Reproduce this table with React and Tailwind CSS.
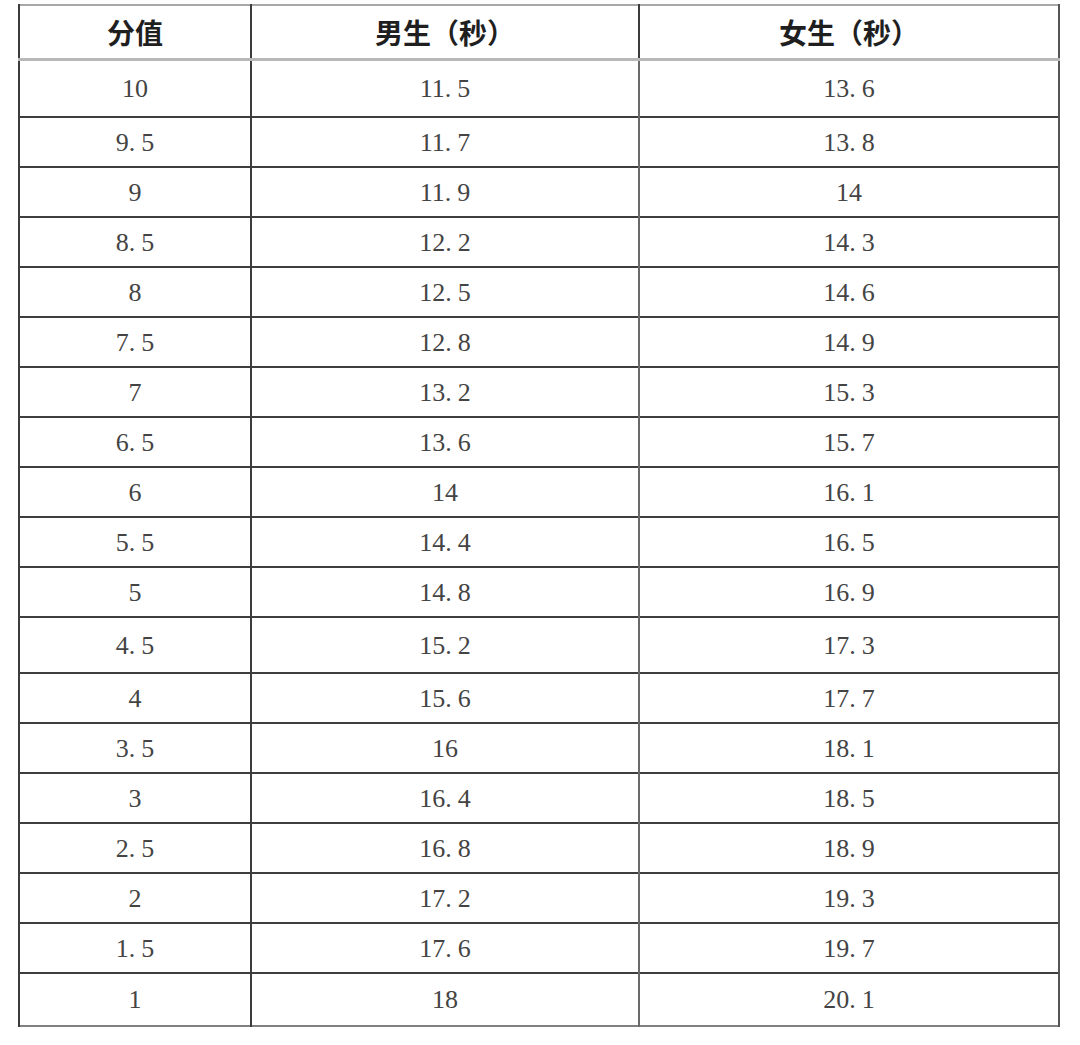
import React from "react";

const rows = [
  ["10", "11.5", "13.6", "h-[58px]"],
  ["9.5", "11.7", "13.8", "h-[50px]"],
  ["9", "11.9", "14", "h-[50px]"],
  ["8.5", "12.2", "14.3", "h-[50px]"],
  ["8", "12.5", "14.6", "h-[50px]"],
  ["7.5", "12.8", "14.9", "h-[50px]"],
  ["7", "13.2", "15.3", "h-[50px]"],
  ["6.5", "13.6", "15.7", "h-[50px]"],
  ["6", "14", "16.1", "h-[50px]"],
  ["5.5", "14.4", "16.5", "h-[50px]"],
  ["5", "14.8", "16.9", "h-[50px]"],
  ["4.5", "15.2", "17.3", "h-[56px]"],
  ["4", "15.6", "17.7", "h-[50px]"],
  ["3.5", "16", "18.1", "h-[50px]"],
  ["3", "16.4", "18.5", "h-[50px]"],
  ["2.5", "16.8", "18.9", "h-[50px]"],
  ["2", "17.2", "19.3", "h-[50px]"],
  ["1.5", "17.6", "19.7", "h-[50px]"],
  ["1", "18", "20.1", "h-[53px]"],
];

// mimic the wide half-width period of the original song-ti digits
function Num({ v }) {
  const [a, b] = v.split(".");
  if (b === undefined) return <span>{a}</span>;
  return (
    <span>
      {a}
      <span className="mr-[6px]">.</span>
      {b}
    </span>
  );
}

export default function App() {
  return (
    <div className="w-[1080px] h-[1045px] bg-white pt-[4px] pl-[18px]">
      <table className="table-fixed border-collapse w-[1040px] text-center">
        <colgroup>
          <col className="w-[232px]" />
          <col className="w-[388px]" />
          <col className="w-[420px]" />
        </colgroup>
        <thead>
          <tr className="h-[54px] border-t-2 border-t-[#a8a8a8] border-b-[3px] border-b-[#b8b8b8]">
            {["分值", "男生（秒）", "女生（秒）"].map((h, i) => (
              <th
                key={h}
                className={`font-bold text-[28px] text-[#1f1f1f] font-['Noto_Sans_CJK_SC',sans-serif] border-l-2 border-l-[#3c3c3c] ${
                  i === 2 ? "border-r-2 border-r-[#555]" : ""
                }`}
              >
                {h}
              </th>
            ))}
          </tr>
        </thead>
        <tbody className="font-['Liberation_Serif','Noto_Sans_CJK_SC',serif] text-[26px] text-[#444]">
          {rows.map(([s, m, f, h], idx) => (
            <tr
              key={s}
              className={`${h} ${
                idx === rows.length - 1
                  ? "border-b-2 border-b-[#808080]"
                  : "border-b-2 border-b-[#3e3e3e]"
              }`}
            >
              <td className="border-l-2 border-l-[#3c3c3c]">
                <Num v={s} />
              </td>
              <td className="border-l-2 border-l-[#3c3c3c]">
                <Num v={m} />
              </td>
              <td className="border-l-2 border-l-[#6a6a6a] border-r-2 border-r-[#555]">
                <Num v={f} />
              </td>
            </tr>
          ))}
        </tbody>
      </table>
    </div>
  );
}
